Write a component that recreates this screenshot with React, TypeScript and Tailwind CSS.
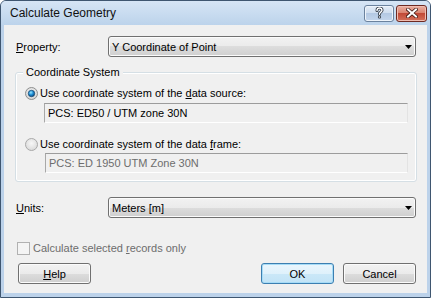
import React from "react";

// Win7 basic-theme "Calculate Geometry" dialog
const ui = "font-['Liberation_Sans',Arial,sans-serif] text-[11px] leading-[14px] text-black";

function Combo({ value }: { value: string }) {
  return (
    <div className="flex h-[21px] flex-1 items-center rounded-[3px] border border-[#707070] bg-[linear-gradient(#f2f2f2_0%,#ebebeb_50%,#dddddd_50%,#cfcfcf_100%)] pl-[3px] pr-[3px] shadow-[inset_0_0_0_1px_#fbfbfb]">
      <span className="flex-1">{value}</span>
      <svg width="7" height="4" viewBox="0 0 7 4">
        <path d="M0 0h7L3.5 4z" fill="#000" />
      </svg>
    </div>
  );
}

function Radio({ checked }: { checked?: boolean }) {
  return (
    <svg width="13" height="13" viewBox="0 0 13 13" className="shrink-0">
      <defs>
        <radialGradient id={checked ? "rb1" : "rb0"} cx="50%" cy="40%" r="60%">
          <stop offset="0" stopColor={checked ? "#f6f6f6" : "#f7f7f7"} />
          <stop offset="1" stopColor={checked ? "#d2d2d2" : "#d9d9d9"} />
        </radialGradient>
        <radialGradient id="rdot" cx="40%" cy="35%" r="70%">
          <stop offset="0" stopColor="#9ae6ff" />
          <stop offset="0.5" stopColor="#1d8fd8" />
          <stop offset="1" stopColor="#0b4477" />
        </radialGradient>
      </defs>
      <circle cx="6.5" cy="6.5" r="6" fill={`url(#${checked ? "rb1" : "rb0"})`} stroke={checked ? "#8e8f8f" : "#a9a9a9"} />
      {checked && <circle cx="6.5" cy="6.5" r="3.2" fill="url(#rdot)" stroke="#1b4a72" strokeWidth="0.8" />}
    </svg>
  );
}

function TextBox({ value, disabled }: { value: string; disabled?: boolean }) {
  return (
    <div
      className={`flex h-[20px] items-center border border-t-[#9c9c9c] border-l-[#a8a8a8] border-r-[#e3e3e3] border-b-[#ffffff] bg-[#f0f0f0] pl-[3px] ${
        disabled ? "text-[#6d6d6d]" : "text-black"
      }`}
    >
      {value}
    </div>
  );
}

function Button({ children, primary }: { children: React.ReactNode; primary?: boolean }) {
  return (
    <div
      className={`flex h-[21px] w-[73px] items-center justify-center rounded-[3px] border ${
        primary
          ? "border-[#3c7fb1] bg-[linear-gradient(#eaf6fd_0%,#dff1fb_50%,#cbe8f8_50%,#c2e3f6_100%)] shadow-[inset_0_0_0_1px_#a7dcf7]"
          : "border-[#707070] bg-[linear-gradient(#f2f2f2_0%,#ebebeb_50%,#dddddd_50%,#cfcfcf_100%)] shadow-[inset_0_0_0_1px_#fbfbfb]"
      }`}
    >
      {children}
    </div>
  );
}

export default function App() {
  return (
    <div className={`${ui} flex h-[298px] w-[431px] flex-col rounded-t-[6px] border border-[#3f5670] bg-[#bcd2ea]`}>
      {/* title bar */}
      <div className="flex h-[24px] shrink-0 items-center rounded-t-[5px] bg-[linear-gradient(#d6e5f5,#bcd3eb)] pl-[9px] pr-[3px]">
        <span className="flex-1 text-[12px] text-[#111]">Calculate Geometry</span>
        <div className="flex h-[17px] w-[30px] items-center justify-center rounded-[3px] border border-[#6b829e] bg-[linear-gradient(#e4edf7_0%,#cddcee_50%,#b4c9e3_50%,#c4d6ec_100%)] shadow-[inset_0_0_0_1px_#eef4fb]">
          <svg width="9" height="12" viewBox="0 0 9 12">
            <path d="M2 3.6C2 1.8 3.1 1 4.5 1S7 1.9 7 3.3C7 4.6 5.6 5 4.8 5.9c-.3.3-.3.8-.3 1.4" fill="none" stroke="#2b3440" strokeWidth="3" strokeLinecap="round" />
            <circle cx="4.5" cy="10" r="1.6" fill="#2b3440" />
            <path d="M2 3.6C2 1.8 3.1 1 4.5 1S7 1.9 7 3.3C7 4.6 5.6 5 4.8 5.9c-.3.3-.3.8-.3 1.4" fill="none" stroke="#fff" strokeWidth="1.4" strokeLinecap="round" />
            <circle cx="4.5" cy="10" r="0.8" fill="#fff" />
          </svg>
        </div>
        <div className="ml-[2px] flex h-[17px] w-[31px] items-center justify-center rounded-[3px] border border-[#6e2a22] bg-[linear-gradient(#eab0a2_0%,#d9806c_50%,#c24a37_50%,#d4705a_100%)] shadow-[inset_0_0_0_1px_#f0bdb1]">
          <svg width="12" height="10" viewBox="0 0 12 10">
            <path d="M2 1.5l8 7M10 1.5l-8 7" stroke="#3d1610" strokeWidth="3.6" strokeLinecap="square" />
            <path d="M2 1.5l8 7M10 1.5l-8 7" stroke="#fff" strokeWidth="2" strokeLinecap="square" />
          </svg>
        </div>
      </div>

      {/* client area */}
      <div className="mx-[3px] mb-[4px] flex flex-1 flex-col bg-[#f0f0f0] pl-[12px] pr-[11px]">
        <div className="mt-[11px] flex items-center">
          <span className="w-[92px]">
            <u>P</u>roperty:
          </span>
          <Combo value="Y Coordinate of Point" />
        </div>

        <fieldset className="mx-[-1px] mt-[8px] rounded-[3px] border border-[#d5dfe5] pb-[8px] shadow-[inset_0_0_0_1px_#fff]">
          <legend className="ml-[7px] bg-[#f0f0f0] px-[3px]">Coordinate System</legend>
          <div className="mt-[7px] flex h-[14px] items-center pl-[9px]">
            <Radio checked />
            <span className="ml-[2px]">
              Use coordinate system of the <u>d</u>ata source:
            </span>
          </div>
          <div className="ml-[28px] mr-[8px] mt-[3px]">
            <TextBox value="PCS: ED50 / UTM zone 30N" />
          </div>
          <div className="mt-[14px] flex h-[14px] items-center pl-[9px]">
            <Radio />
            <span className="ml-[2px]">
              Use coordinate system of the data <u>f</u>rame:
            </span>
          </div>
          <div className="ml-[29px] mr-[8px] mt-[2px]">
            <TextBox value="PCS: ED 1950 UTM Zone 30N" disabled />
          </div>
        </fieldset>

        <div className="mt-[15px] flex items-center">
          <span className="w-[92px]">
            <u>U</u>nits:
          </span>
          <Combo value="Meters [m]" />
        </div>

        <div className="mt-[23px] flex h-[14px] items-center pl-[1px] text-[#6d6d6d]">
          <div className="h-[13px] w-[13px] border border-[#b1b1b1] bg-[#f4f4f4]" />
          <span className="ml-[3px]">
            Calculate selected <u>r</u>ecords only
          </span>
        </div>

        <div className="mt-[8px] flex items-center pl-[2px]">
          <Button>
            <u>H</u>elp
          </Button>
          <div className="flex-1" />
          <Button primary>OK</Button>
          <div className="w-[9px]" />
          <Button>Cancel</Button>
        </div>
      </div>
    </div>
  );
}
